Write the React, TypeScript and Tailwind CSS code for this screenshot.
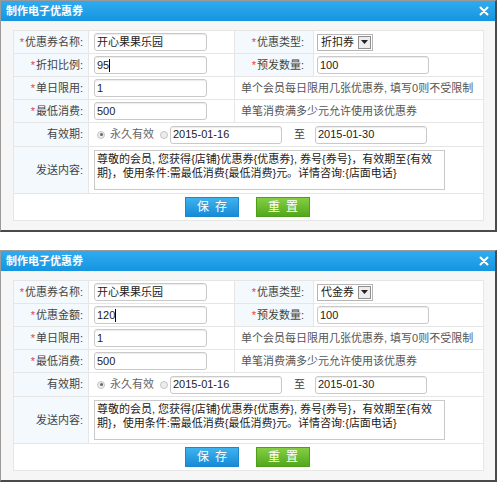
import React from "react";

type DialogProps = {
  rateLabel: string;
  rateValue: string;
  typeValue: string;
};

const font = { fontFamily: '"Liberation Sans", "Noto Sans CJK SC", sans-serif' };

function Star() {
  return <span className="text-[#e8413a] mr-px">*</span>;
}

function TextInput({ value, width = "w-[113px]", cursor = false }: { value: string; width?: string; cursor?: boolean }) {
  return (
    <div
      className={`${width} h-[18px] border border-[#c9c9c9] rounded-[3px] bg-white flex items-center pl-[2px] text-[11px] text-[#222] shadow-[inset_0_1px_1px_rgba(0,0,0,0.08)]`}
    >
      <span>{value}</span>
      {cursor && <span className="w-px h-[13px] bg-black" />}
    </div>
  );
}

function Radio({ checked }: { checked?: boolean }) {
  return (
    <span className="w-[8px] h-[8px] rounded-full border border-[#c4c4c4] bg-[#ececec] flex items-center justify-center">
      {checked && <span className="w-[3px] h-[3px] rounded-full bg-[#666]" />}
    </span>
  );
}

function Label({ children, required, pr = "pr-[5px]" }: { children: React.ReactNode; required?: boolean; pr?: string }) {
  return (
    <td className={`bg-[#f3f9fd] text-right ${pr} text-[11px] text-[#444] border border-[#e6e6e6] whitespace-nowrap`}>
      {required && <Star />}
      {children}
    </td>
  );
}

function Dialog({ rateLabel, rateValue, typeValue }: DialogProps) {
  return (
    <div className="w-[497px] border-l border-t border-[#9a9a9a] border-r-2 border-b-2 border-r-[#4a4a4a] border-b-[#4a4a4a] bg-[#f6f6f6]">
      <div className="h-[20px] bg-gradient-to-b from-[#2eabf0] to-[#1595e0] flex items-center justify-between pl-[5px] pr-[6px]">
        <span className="text-white font-bold text-[11px]">制作电子优惠券</span>
        <svg width="10" height="10" viewBox="0 0 10 10">
          <path d="M1.5 1.5 L8.5 8.5 M8.5 1.5 L1.5 8.5" stroke="#ffffff" strokeWidth="2" strokeLinecap="round" />
        </svg>
      </div>
      <div className="pt-[9px] pl-[12px] pr-[12px] pb-[9px]">
        <table className="w-[470px] border-collapse bg-white table-fixed" style={font}>
          <colgroup>
            <col className="w-[75px]" />
            <col className="w-[146px]" />
            <col className="w-[79px]" />
            <col className="w-[170px]" />
          </colgroup>
          <tbody>
            <tr className="h-[23px]">
              <Label required>优惠券名称:</Label>
              <td className="border border-[#e6e6e6] pl-[5px]">
                <TextInput value="开心果果乐园" />
              </td>
              <Label required pr="pr-[9px]">优惠类型:</Label>
              <td className="border border-[#e6e6e6] pl-[3px]">
                <div className="w-[56px] h-[17px] border border-[#b5b5b5] bg-white flex items-center justify-between pl-[3px] pr-[1px] text-[11px] text-[#222]">
                  <span>{typeValue}</span>
                  <span className="w-[13px] h-[13px] border border-[#8f8f8f] bg-[#ededed] flex items-center justify-center">
                    <svg width="7" height="4" viewBox="0 0 7 4">
                      <path d="M0 0 L7 0 L3.5 4 Z" fill="#222" />
                    </svg>
                  </span>
                </div>
              </td>
            </tr>
            <tr className="h-[23px]">
              <Label required>{rateLabel}</Label>
              <td className="border border-[#e6e6e6] pl-[5px]">
                <TextInput value={rateValue} cursor />
              </td>
              <Label required pr="pr-[9px]">预发数量:</Label>
              <td className="border border-[#e6e6e6] pl-[3px]">
                <TextInput value="100" width="w-[112px]" />
              </td>
            </tr>
            <tr className="h-[23px]">
              <Label required>单日限用:</Label>
              <td className="border border-[#e6e6e6] pl-[5px]">
                <TextInput value="1" />
              </td>
              <td colSpan={2} className="border border-[#e6e6e6] pl-[6px] text-[11px] text-[#555] whitespace-nowrap">
                单个会员每日限用几张优惠券, 填写0则不受限制
              </td>
            </tr>
            <tr className="h-[23px]">
              <Label required>最低消费:</Label>
              <td className="border border-[#e6e6e6] pl-[5px]">
                <TextInput value="500" />
              </td>
              <td colSpan={2} className="border border-[#e6e6e6] pl-[6px] text-[11px] text-[#555] whitespace-nowrap">
                单笔消费满多少元允许使用该优惠券
              </td>
            </tr>
            <tr className="h-[24px]">
              <Label>有效期:</Label>
              <td colSpan={3} className="border border-[#e6e6e6] pl-[5px]">
                <div className="flex items-center text-[11px]">
                  <span className="ml-[3px]"><Radio checked /></span>
                  <span className="ml-[5px] text-[#666]">永久有效</span>
                  <span className="ml-[6px]"><Radio /></span>
                  <span className="ml-[2px]"><TextInput value="2015-01-16" width="w-[112px]" /></span>
                  <span className="ml-[12px] text-[#444]">至</span>
                  <span className="ml-[10px]"><TextInput value="2015-01-30" width="w-[112px]" /></span>
                </div>
              </td>
            </tr>
            <tr className="h-[47px]">
              <Label>发送内容:</Label>
              <td colSpan={3} className="border border-[#e6e6e6] pl-[5px]">
                <div className="w-[351px] h-[40px] border border-[#c9c9c9] bg-white px-[2px] pt-[1px] text-[11px] leading-[14px] text-[#222] whitespace-nowrap">
                  <div>尊敬的会员, 您获得{"{"}店铺{"}"}优惠券{"{"}优惠券{"}"}, 券号{"{"}券号{"}"}，有效期至{"{"}有效</div>
                  <div>期{"}"}，使用条件:需最低消费{"{"}最低消费{"}"}元。详情咨询:{"{"}店面电话{"}"}</div>
                </div>
              </td>
            </tr>
            <tr className="h-[27px]">
              <td colSpan={4} className="border border-[#e6e6e6]">
                <div className="flex justify-center gap-[17px] pr-[2px]">
                  <button className="w-[54px] h-[20px] bg-gradient-to-b from-[#3db3ee] to-[#168ad6] border border-[#1a87cf] text-white text-[12px] tracking-[6px] pl-[6px]">
                    保存
                  </button>
                  <button className="w-[54px] h-[20px] bg-gradient-to-b from-[#84cf43] to-[#52a71c] border border-[#4e9e1c] text-white text-[12px] tracking-[6px] pl-[6px]">
                    重置
                  </button>
                </div>
              </td>
            </tr>
          </tbody>
        </table>
      </div>
    </div>
  );
}

export default function App() {
  return (
    <div className="w-[498px] h-[483px] bg-white" style={font}>
      <Dialog rateLabel="折扣比例:" rateValue="95" typeValue="折扣券" />
      <div className="h-[18px]" />
      <Dialog rateLabel="优惠金额:" rateValue="120" typeValue="代金券" />
    </div>
  );
}
